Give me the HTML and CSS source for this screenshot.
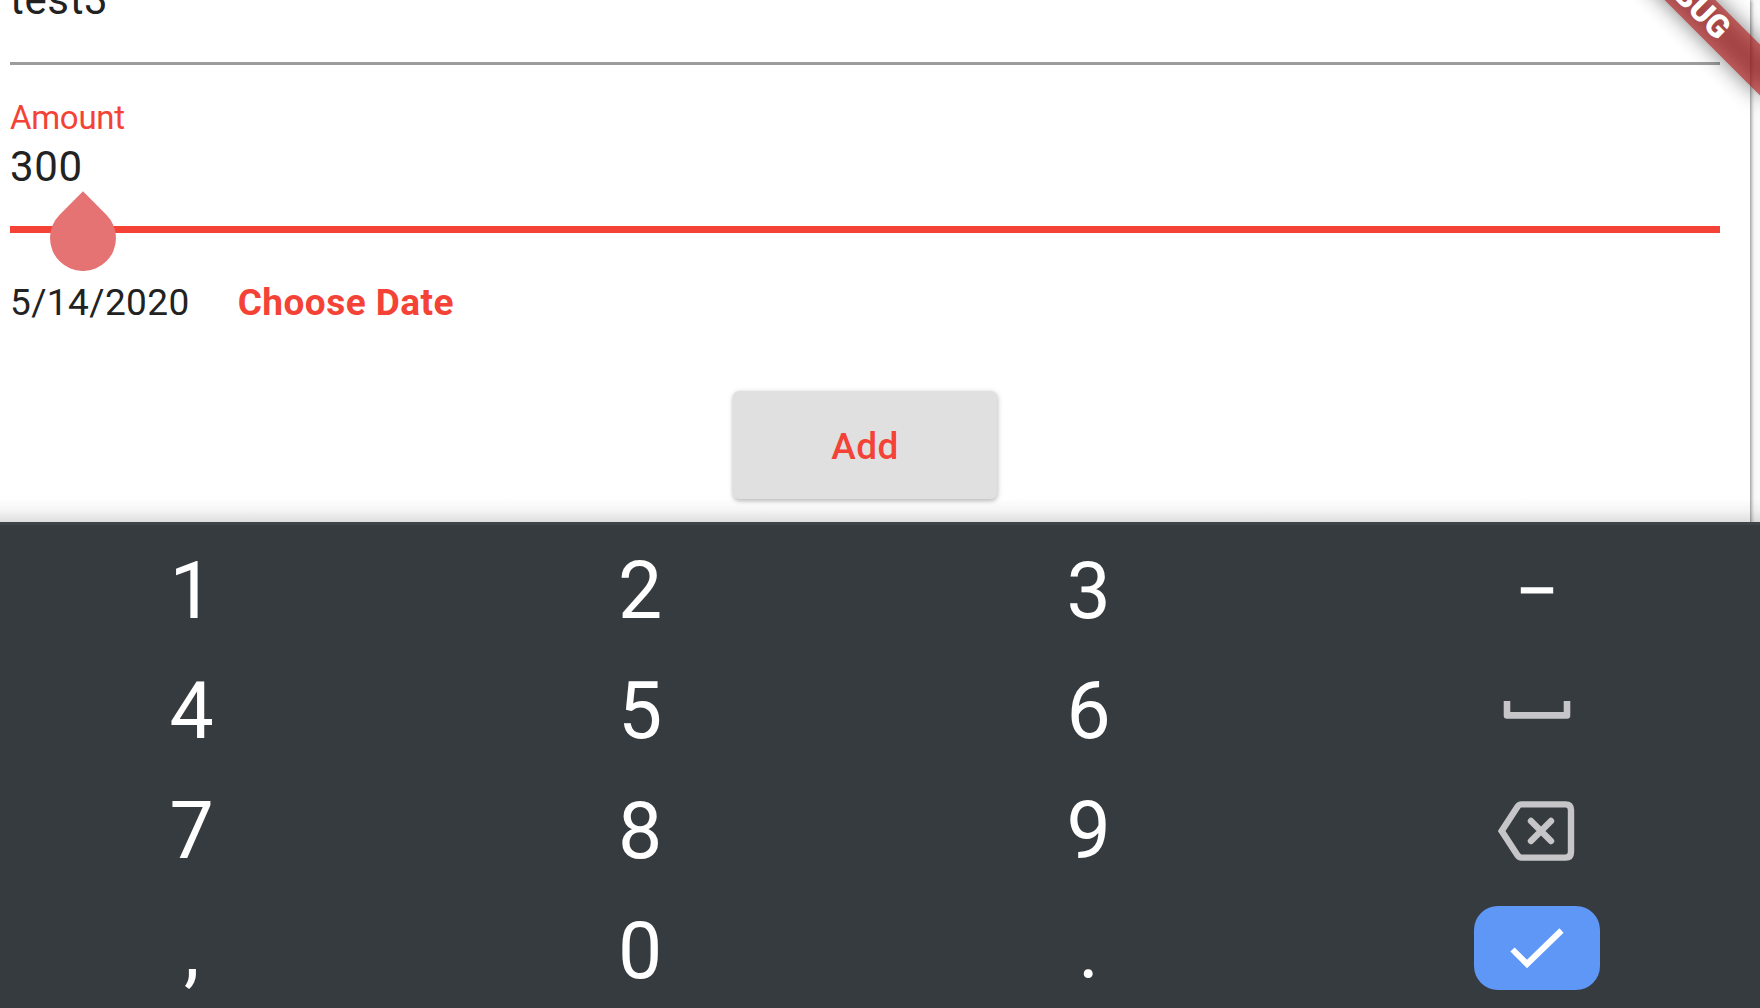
FILE: index.html
```html
<!DOCTYPE html>
<html lang="en">
<head>
<meta charset="utf-8">
<title>New transaction</title>
<link rel="stylesheet" href="styles.css">
</head>
<body>
<main class="screen">
  <section class="sheet">
    <form class="card">
      <div class="field field-title"><span class="value">test3</span></div>
      <div class="field field-amount">
        <span class="label">Amount</span>
        <span class="value">300</span>
        <svg class="handle" width="66" height="80" viewBox="0 0 66 80"><path d="M33 0.3L56.33 23.67A33 33 0 1 1 9.67 23.67Z" fill="#e57373"/></svg>
      </div>
      <div class="date-row"><span class="date">5/14/2020</span><span class="choose">Choose Date</span></div>
      <button class="add" type="button">Add</button>
    </form>
    <div class="banner">DEBUG</div>
  </section>
  <section class="keyboard">
    <div class="keys">
      <div class="key">1</div><div class="key">2</div><div class="key">3</div>
      <div class="key"><svg width="34" height="8" viewBox="0 0 34 8"><path d="M.8 1.2H33.2V7.4H.8Z" fill="#fff"/></svg></div>
      <div class="key">4</div><div class="key">5</div><div class="key">6</div>
      <div class="key"><svg width="68" height="20" viewBox="0 0 68 20"><path d="M4 1V15.4H64V1" fill="none" stroke="#c6c6c8" stroke-width="6.6" stroke-linejoin="round"/></svg></div>
      <div class="key">7</div><div class="key">8</div><div class="key">9</div>
      <div class="key key-delete"><svg width="78" height="60" viewBox="0 0 78 60"><g fill="none" stroke="#c6c6c8" stroke-width="6.4"><path d="M23.5 3.4H67.5Q73 3.4 73 9V51Q73 56.6 67.5 56.6H23.5Q21 56.6 19.3 54L3.7 30L19.3 6Q21 3.4 23.5 3.4Z"/><path d="M33 20L53 40M53 20L33 40" stroke-linecap="round"/></g></svg></div>
      <div class="key">,</div><div class="key">0</div><div class="key">.</div>
      <div class="key key-enter"><span class="enter"><svg width="54" height="42" viewBox="0 0 54 42"><path d="M2.5 22.5L17 37L51.5 3.5" fill="none" stroke="#fff" stroke-width="6"/></svg></span></div>
    </div>
  </section>
</main>
</body>
</html>
```
FILE: styles.css
```css
* { box-sizing: border-box; }
body { margin: 0; font-family: Roboto, sans-serif; }
.screen { width: 1760px; height: 1008px; overflow: hidden; display: flex; flex-direction: column; }
.sheet { position: relative; height: 522px; background: #fafafa; overflow: hidden; }
.card {
  width: 1750px; height: 540px; padding: 0 30px 0 10px;
  background: #fff; color: #222;
  display: flex; flex-direction: column;
  box-shadow: 1px 0 4px rgba(0, 0, 0, .5);
}
.value { font-size: 42px; line-height: 50px; letter-spacing: .65px; }
.field { display: flex; flex-direction: column; }
.field-title { height: 65px; border-bottom: 3px solid #9b9d9c; }
.field-title .value { margin-top: -25px; }
.field-amount { position: relative; height: 168px; padding-top: 34px; border-bottom: 7px solid #f44336; }
.label { font-size: 33px; line-height: 38px; letter-spacing: -.3px; color: #f44336; }
.field-amount .value { margin-top: 5px; }
.handle { position: absolute; left: 40px; top: 126px; }
.date-row { display: flex; gap: 48px; margin-top: 48px; font-size: 37px; line-height: 44px; letter-spacing: .4px; }
.choose { font-weight: 700; color: #f44336; letter-spacing: .45px; }
.add {
  align-self: center; width: 264px; height: 108px; margin-top: 66px; padding: 3px 0 0;
  border: 0; border-radius: 6px; background: #e0e0e0; color: #f44336;
  font: 500 37px/105px Roboto, sans-serif; letter-spacing: .4px;
  box-shadow: 0 2px 4px rgba(0, 0, 0, .2), 1px 1px 6px rgba(0, 0, 0, .12);
}
.sheet::after {
  content: ""; position: absolute; left: 0; right: 0; bottom: 0; height: 24px;
  background: linear-gradient(rgba(0, 0, 0, 0), rgba(0, 0, 0, .04) 50%, rgba(0, 0, 0, .13));
}
.banner {
  position: absolute; left: 1568px; top: -20.5px; width: 240px; height: 36px;
  transform: rotate(45deg);
  color: #fff;
  font-size: 32px; line-height: 35px; font-weight: 900; text-align: center;
}
.banner::before, .banner::after { content: ""; position: absolute; inset: 0; }
.banner::before { z-index: -2; background: rgba(0, 0, 0, .5); filter: blur(11px); }
.banner::after { z-index: -1; background: rgba(183, 28, 28, .627); }
.keyboard { height: 486px; padding-top: 5px; background: #363b3f; border-top: 3px solid #3e4448; }
.keys {
  display: grid; grid-template-columns: repeat(4, 448.5px); grid-auto-rows: 120px;
  margin-left: -32.5px;
}
.key { display: flex; align-items: center; justify-content: center; color: #fff; font-size: 78.75px; line-height: 116px; padding-top: 1px; }
.key:nth-child(4n) { padding-top: 0; }
.key.key-delete { padding-top: 2px; }
.key.key-enter { padding-bottom: 4px; }
.enter { width: 126px; height: 84px; border-radius: 24px; background: #5e97f6; display: flex; align-items: center; justify-content: center; }
```
